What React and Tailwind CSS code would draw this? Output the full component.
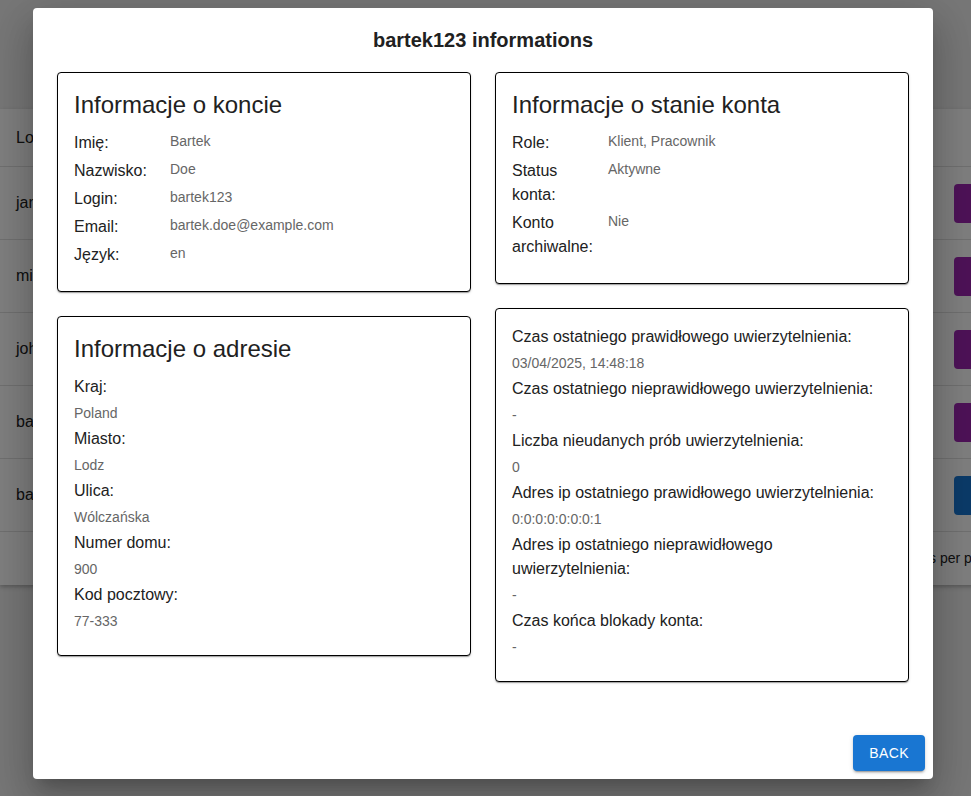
import React from "react";

const rows = [
  { name: "jankowalski", color: "bg-[#9c27b0]" },
  { name: "michalnowak", color: "bg-[#9c27b0]" },
  { name: "johndoe", color: "bg-[#9c27b0]" },
  { name: "bartek456", color: "bg-[#9c27b0]" },
  { name: "bartek123", color: "bg-[#1976d2]" },
];

const cardCls =
  "border border-black rounded-[4px] bg-white px-4 pt-4 pb-6 shadow-[0_2px_1px_-1px_rgba(0,0,0,0.2),0_1px_1px_0_rgba(0,0,0,0.14),0_1px_3px_0_rgba(0,0,0,0.12)]";

function Row({ label, value }) {
  return (
    <div className="flex items-start">
      <div className="mr-2 w-[88px] shrink-0 text-[16px] leading-[24px] text-[#212121]">{label}</div>
      <div className="flex-1 text-[14px] leading-[20px] text-[#666666]">{value}</div>
    </div>
  );
}

function Stacked({ label, value }) {
  return (
    <>
      <div className="text-[16px] leading-[24px] text-[#212121]">{label}</div>
      <div className="text-[14px] leading-[20px] text-[#666666]">{value}</div>
    </>
  );
}

export default function App() {
  return (
    <div className="relative h-[796px] w-[971px] overflow-hidden bg-[#eeeeee] font-['Liberation_Sans',Arial,sans-serif]">
      {/* background page */}
      <div className="pt-[109px]">
        <div className="w-[1040px] bg-white shadow-[0_2px_4px_rgba(0,0,0,0.25)]">
          <div className="flex h-[58px] items-center border-b border-[#e0e0e0] pl-4 text-[16px] text-[#212121]">
            Login
          </div>
          {rows.map((r) => (
            <div
              key={r.name}
              className="flex h-[73px] items-center justify-between border-b border-[#e0e0e0] pl-4 pr-[6px] text-[16px] text-[#212121]"
            >
              <span>{r.name}</span>
              <div className={`h-[39px] w-[80px] rounded-[4px] ${r.color}`} />
            </div>
          ))}
          <div className="flex h-[53px] items-center pl-[901px] text-[14px] text-[#212121]">
            Rows per page:
          </div>
        </div>
      </div>

      {/* overlay */}
      <div className="absolute inset-0 bg-black/50" />

      {/* dialog */}
      <div className="absolute left-[33px] top-[8px] flex h-[771px] w-[900px] flex-col rounded-[4px] bg-white shadow-[0_11px_15px_-7px_rgba(0,0,0,0.2),0_24px_38px_3px_rgba(0,0,0,0.14),0_9px_46px_8px_rgba(0,0,0,0.12)]">
        <div className="px-6 pt-4 text-center text-[20px] font-bold leading-[32px] text-[#212121]">
          bartek123 informations
        </div>
        <div className="flex-1 px-6 pt-4">
          <div className="grid grid-cols-2 items-start gap-x-6">
            <div className="flex flex-col gap-6">
              <div className={cardCls}>
                <div className="mb-[10px] text-[24px] leading-[32px] text-[#212121]">Informacje o koncie</div>
                <div className="flex flex-col gap-1">
                  <Row label="Imię:" value="Bartek" />
                  <Row label="Nazwisko:" value="Doe" />
                  <Row label="Login:" value="bartek123" />
                  <Row label="Email:" value="bartek.doe@example.com" />
                  <Row label="Język:" value="en" />
                </div>
              </div>
              <div className={cardCls}>
                <div className="mb-[10px] text-[24px] leading-[32px] text-[#212121]">Informacje o adresie</div>
                <div className="flex flex-col gap-1">
                  <Stacked label="Kraj:" value="Poland" />
                  <Stacked label="Miasto:" value="Lodz" />
                  <Stacked label="Ulica:" value="Wólczańska" />
                  <Stacked label="Numer domu:" value="900" />
                  <Stacked label="Kod pocztowy:" value="77-333" />
                </div>
              </div>
            </div>
            <div className="flex flex-col gap-6">
              <div className={cardCls}>
                <div className="mb-[10px] text-[24px] leading-[32px] text-[#212121]">Informacje o stanie konta</div>
                <div className="flex flex-col gap-1">
                  <Row label="Role:" value="Klient, Pracownik" />
                  <Row label="Status konta:" value="Aktywne" />
                  <Row label="Konto archiwalne:" value="Nie" />
                </div>
              </div>
              <div className={cardCls}>
                <div className="flex flex-col gap-1">
                  <Stacked label="Czas ostatniego prawidłowego uwierzytelnienia:" value="03/04/2025, 14:48:18" />
                  <Stacked label="Czas ostatniego nieprawidłowego uwierzytelnienia:" value="-" />
                  <Stacked label="Liczba nieudanych prób uwierzytelnienia:" value="0" />
                  <Stacked label="Adres ip ostatniego prawidłowego uwierzytelnienia:" value="0:0:0:0:0:0:0:1" />
                  <Stacked label="Adres ip ostatniego nieprawidłowego uwierzytelnienia:" value="-" />
                  <Stacked label="Czas końca blokady konta:" value="-" />
                </div>
              </div>
            </div>
          </div>
        </div>
        <div className="flex justify-end p-2">
          <button className="rounded-[4px] bg-[#1976d2] px-4 py-[6px] text-[14px] uppercase leading-[24.5px] tracking-[0.4px] text-white shadow-[0_3px_1px_-2px_rgba(0,0,0,0.2),0_2px_2px_0_rgba(0,0,0,0.14),0_1px_5px_0_rgba(0,0,0,0.12)]">
            Back
          </button>
        </div>
      </div>
    </div>
  );
}
